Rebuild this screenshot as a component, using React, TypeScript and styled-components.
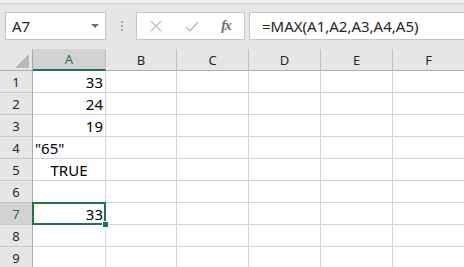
import React from "react";
import styled, { createGlobalStyle } from "styled-components";

const GlobalStyle = createGlobalStyle`
  html, body {
    margin: 0;
    padding: 0;
    background: #ffffff;
    overflow: hidden;
  }
  body {
    font-family: "Noto Sans", "Open Sans", sans-serif;
  }
`;

const Page = styled.div`
  width: 464px;
  height: 267px;
  overflow: hidden;
  background: #ffffff;
`;

const FormulaBar = styled.div`
  align-items: flex-start;
  background: linear-gradient(#f3f3f3 0, #f3f3f3 2px, #d6d6d6 3px, #e6e6e6 5px);
  display: flex;
  height: 49px;
  padding: 12px 0 0 5px;
  box-sizing: border-box;
`;

const NameBox = styled.div`
  align-items: center;
  background: #ffffff;
  border: 1px solid #c6c6c6;
  box-sizing: border-box;
  color: #262626;
  display: flex;
  font-size: 15px;
  height: 28px;
  justify-content: space-between;
  padding: 0 6px 0 6px;
  width: 101px;
`;

const DropArrow = styled.span`
  border-left: 4px solid transparent;
  border-right: 4px solid transparent;
  border-top: 4px solid #6d6d6d;
  height: 0;
  width: 0;
`;

const Grip = styled.div`
  display: flex;
  flex-direction: column;
  gap: 2px;
  height: 28px;
  justify-content: center;
  margin: 0 13px 0 15px;
  span {
    background: #a6a6a6;
    height: 2px;
    width: 2px;
  }
`;

const ActionBox = styled.div`
  align-items: center;
  background: #ffffff;
  border: 1px solid #c6c6c6;
  box-sizing: border-box;
  display: flex;
  height: 28px;
  margin-right: 4px;
  width: 109px;
`;

const ActionButton = styled.span<{ $w: number }>`
  align-items: center;
  display: flex;
  justify-content: center;
  width: ${({ $w }) => $w}px;
`;

const FxLabel = styled.span`
  color: #6d6d6d;
  font-family: "Liberation Serif", serif;
  font-size: 14px;
  font-style: italic;
  font-weight: 700;
  letter-spacing: -1px;
`;

const FormulaInput = styled.div`
  align-items: center;
  background: #ffffff;
  border: 1px solid #c6c6c6;
  border-right: none;
  box-sizing: border-box;
  color: #262626;
  display: flex;
  flex: 1;
  font-size: 15px;
  height: 28px;
  padding-left: 12px;
`;

const Sheet = styled.div`
  display: grid;
  grid-template-columns: 33px 73px 71px 72px 72px 72px 72px;
  grid-auto-rows: 22px;
`;

const Corner = styled.div`
  background: #e6e6e6;
  border-bottom: 1px solid #ababab;
  border-right: 1px solid #ababab;
  box-sizing: border-box;
  position: relative;
  &::after {
    border-bottom: 14px solid #b8b8b8;
    border-left: 14px solid transparent;
    bottom: 2px;
    content: "";
    position: absolute;
    right: 3px;
  }
`;

const ColHeader = styled.div<{ $active?: boolean }>`
  align-items: center;
  background: ${({ $active }) => ($active ? "#d2d2d2" : "#e6e6e6")};
  border-bottom: ${({ $active }) => ($active ? "2px solid #217346" : "1px solid #ababab")};
  border-right: 1px solid #c0c0c0;
  box-sizing: border-box;
  color: ${({ $active }) => ($active ? "#217346" : "#262626")};
  display: flex;
  font-size: 13px;
  justify-content: center;
`;

const RowHeader = styled.div<{ $active?: boolean }>`
  align-items: center;
  background: ${({ $active }) => ($active ? "#d2d2d2" : "#e6e6e6")};
  border-bottom: 1px solid #c8c8c8;
  border-right: 1px solid ${({ $active }) => ($active ? "#217346" : "#ababab")};
  box-sizing: border-box;
  color: ${({ $active }) => ($active ? "#217346" : "#262626")};
  display: flex;
  font-size: 13px;
  justify-content: center;
`;

const Cell = styled.div<{ $align?: "left" | "right" | "center"; $selected?: boolean }>`
  align-items: center;
  border-bottom: 1px solid #d4d4d4;
  border-right: 1px solid #d4d4d4;
  box-sizing: border-box;
  color: #000000;
  display: flex;
  font-size: 15px;
  justify-content: ${({ $align }) =>
    $align === "right" ? "flex-end" : $align === "center" ? "center" : "flex-start"};
  padding: 0 2px 0 2px;
  position: relative;
  ${({ $selected }) =>
    $selected &&
    `
    &::before {
      content: "";
      position: absolute;
      inset: -1px -1px -1px -1px;
      border: 2px solid #217346;
      pointer-events: none;
    }
    &::after {
      content: "";
      position: absolute;
      right: -4px;
      bottom: -4px;
      width: 5px;
      height: 5px;
      background: #217346;
      border: 1px solid #ffffff;
      z-index: 2;
    }
  `}
`;

const columns = ["A", "B", "C", "D", "E", "F"];

type CellData = { text: string; align: "left" | "right" | "center" };

const columnA: Record<number, CellData> = {
  1: { text: "33", align: "right" },
  2: { text: "24", align: "right" },
  3: { text: "19", align: "right" },
  4: { text: '"65"', align: "left" },
  5: { text: "TRUE", align: "center" },
  7: { text: "33", align: "right" },
};

const CrossIcon = () => (
  <svg width="12" height="12" viewBox="0 0 12 12">
    <path d="M1 1l10 10M11 1L1 11" stroke="#bdbdbd" strokeWidth="1.3" fill="none" />
  </svg>
);

const CheckIcon = () => (
  <svg width="14" height="11" viewBox="0 0 14 11">
    <path d="M1 6l4 4 8-9" stroke="#bdbdbd" strokeWidth="1.4" fill="none" />
  </svg>
);

export default function App() {
  const rows = [1, 2, 3, 4, 5, 6, 7, 8, 9];
  return (
    <Page>
      <GlobalStyle />
      <FormulaBar>
        <NameBox>
          <span>A7</span>
          <DropArrow />
        </NameBox>
        <Grip>
          <span />
          <span />
          <span />
        </Grip>
        <ActionBox>
          <ActionButton $w={38}>
            <CrossIcon />
          </ActionButton>
          <ActionButton $w={34}>
            <CheckIcon />
          </ActionButton>
          <ActionButton $w={34}>
            <FxLabel>fx</FxLabel>
          </ActionButton>
        </ActionBox>
        <FormulaInput>=MAX(A1,A2,A3,A4,A5)</FormulaInput>
      </FormulaBar>
      <Sheet>
        <Corner />
        {columns.map((c) => (
          <ColHeader key={c} $active={c === "A"}>
            {c}
          </ColHeader>
        ))}
        {rows.map((r) => (
          <React.Fragment key={r}>
            <RowHeader $active={r === 7}>{r}</RowHeader>
            {columns.map((c) => {
              const data = c === "A" ? columnA[r] : undefined;
              return (
                <Cell
                  key={c}
                  $align={data?.align}
                  $selected={c === "A" && r === 7}
                >
                  {data?.text}
                </Cell>
              );
            })}
          </React.Fragment>
        ))}
      </Sheet>
    </Page>
  );
}
